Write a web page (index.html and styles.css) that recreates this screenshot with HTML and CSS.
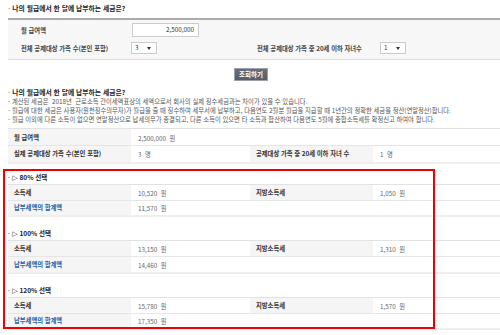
FILE: index.html
```html
<!DOCTYPE html>
<html lang="ko">
<head>
    <meta charset="UTF-8">
    <title>월급 세금 계산</title>
    <link rel="stylesheet" href="styles.css">
</head>
<body>
    <div class="page">
        <h2 class="title">나의 월급에서 한 달에 납부하는 세금은?</h2>

        <div class="form-box">
            <div class="form-row">
                <span class="form-label">월 급여액</span>
                <div class="input">2,500,000</div>
            </div>
            <div class="form-row">
                <span class="form-label">전체 공제대상 가족 수(본인 포함)</span>
                <div class="select">3</div>
                <span class="form-label right">전체 공제대상 가족 중 20세 이하 자녀수</span>
                <div class="select">1</div>
            </div>
        </div>

        <div class="btn-row">
            <button class="btn">조회하기</button>
        </div>

        <h2 class="title">나의 월급에서 한 달에 납부하는 세금은?</h2>
        <ul class="notes">
            <li>- 계산된 세금은&nbsp; 2018년&nbsp; 근로소득 간이세액표상의 세액으로서 회사의 실제 징수세금과는 차이가 있을 수 있습니다.</li>
            <li>- 월급에 대한 세금은 사용자(원천징수의무자)가 월급을 줄 때 징수하여 세무서에 납부하고, 다음연도 2월분 월급을 지급할 때 1년간의 정확한 세금을 정산(연말정산)합니다.</li>
            <li>- 월급 이외에 다른 소득이 없으면 연말정산으로 납세의무가 종결되고, 다른 소득이 있으면 타 소득과 합산하여 다음연도 5월에 종합소득세를 확정신고 하여야 합니다.</li>
        </ul>

        <table class="result summary">
            <colgroup><col class="c1"><col class="c2"><col class="c3"><col></colgroup>
            <tr>
                <th>월 급여액</th>
                <td colspan="3">2,500,000&nbsp; 원</td>
            </tr>
            <tr>
                <th>실제 공제대상 가족 수(본인 포함)</th>
                <td>3&nbsp; 명</td>
                <th>공제대상 가족 중 20세 이하 자녀 수</th>
                <td>1&nbsp; 명</td>
            </tr>
        </table>

        <div class="section">
            <h3 class="sub-title"><span class="arrow">▷</span>80% 선택</h3>
            <table class="result">
                <colgroup><col class="c1"><col class="c2"><col class="c3"><col></colgroup>
                <tr>
                    <th>소득세</th>
                    <td>10,520&nbsp; 원</td>
                    <th>지방소득세</th>
                    <td>1,050&nbsp; 원</td>
                </tr>
                <tr>
                    <th class="total">납부세액의 합계액</th>
                    <td>11,570&nbsp; 원</td>
                    <td></td>
                    <td></td>
                </tr>
            </table>
        </div>

        <div class="section">
            <h3 class="sub-title"><span class="arrow">▷</span>100% 선택</h3>
            <table class="result">
                <colgroup><col class="c1"><col class="c2"><col class="c3"><col></colgroup>
                <tr>
                    <th>소득세</th>
                    <td>13,150&nbsp; 원</td>
                    <th>지방소득세</th>
                    <td>1,310&nbsp; 원</td>
                </tr>
                <tr>
                    <th class="total">납부세액의 합계액</th>
                    <td>14,460&nbsp; 원</td>
                    <td></td>
                    <td></td>
                </tr>
            </table>
        </div>

        <div class="section">
            <h3 class="sub-title"><span class="arrow">▷</span>120% 선택</h3>
            <table class="result">
                <colgroup><col class="c1"><col class="c2"><col class="c3"><col></colgroup>
                <tr>
                    <th>소득세</th>
                    <td>15,780&nbsp; 원</td>
                    <th>지방소득세</th>
                    <td>1,570&nbsp; 원</td>
                </tr>
                <tr>
                    <th class="total">납부세액의 합계액</th>
                    <td>17,350&nbsp; 원</td>
                    <td></td>
                    <td></td>
                </tr>
            </table>
        </div>

        <!-- red annotation box over the three options -->
        <div class="highlight"></div>
    </div>
</body>
</html>
```

FILE: styles.css
```css
* {
    margin: 0;
    padding: 0;
    box-sizing: border-box;
}

body {
    font-family: "Noto Sans CJK KR", "Noto Sans", sans-serif;
    font-size: 6.3px;
    color: #555555;
    background: #ffffff;
    overflow: hidden;
}

.page {
    position: relative;
    width: 500px;
    padding-left: 8px;
}

.title {
    font-size: 6.8px;
    font-weight: bold;
    color: #222222;
    height: 10px;
    line-height: 10px;
    margin-top: 3px;
    white-space: nowrap;
}

.title::before {
    content: '·';
    color: #888888;
    margin-right: 2px;
}

/* search form */
.form-box {
    margin-top: 5px;
    background: #f7f7f7;
    border-top: 2px solid #acacac;
    border-bottom: 1px solid #dddddd;
    padding: 1px 0 2px;
}

.form-row {
    display: grid;
    grid-template-columns: 123px 119px 123px 1fr;
    align-items: center;
    height: 18px;
}

.form-label {
    font-weight: bold;
    color: #444444;
    padding-left: 13px;
    white-space: nowrap;
}

.form-label.right {
    padding-left: 7px;
}

.input {
    width: 67px;
    height: 14px;
    margin-left: 1px;
    background: #ffffff;
    border: 1px solid #cccccc;
    text-align: right;
    padding-right: 4px;
    line-height: 12px;
    color: #333333;
}

.select {
    position: relative;
    width: 26px;
    height: 12px;
    background: #ffffff;
    border: 1px solid #cccccc;
    padding-left: 3px;
    line-height: 10px;
    color: #333333;
}

.form-row .select:last-child {
    margin-left: 7px;
}

.select::after {
    content: '';
    position: absolute;
    right: 5px;
    top: 4px;
    border-left: 2px solid transparent;
    border-right: 2px solid transparent;
    border-top: 3px solid #333333;
}

.btn-row {
    display: flex;
    justify-content: center;
    padding-right: 6px;
    margin-top: 8px;
}

.btn {
    width: 34px;
    height: 13px;
    background: linear-gradient(#68707e, #555c69);
    border: 1px solid #9aa0aa;
    color: #ffffff;
    font-family: inherit;
    font-size: 6.5px;
    font-weight: bold;
    line-height: 11px;
}

.btn-row + .title {
    margin-top: 6px;
}

.notes {
    list-style: none;
    line-height: 9px;
    color: #555555;
    white-space: nowrap;
}

/* result tables */
.result {
    width: 100%;
    table-layout: fixed;
    border-collapse: collapse;
    border-top: 1px solid #e2e2e2;
}

.result .c1 { width: 123px; }
.result .c2 { width: 119px; }
.result .c3 { width: 123px; }

.result th,
.result td {
    height: 16px;
    border-bottom: 1px solid #e6e6e6;
    text-align: left;
    white-space: nowrap;
    overflow: hidden;
}

.result th {
    background: #f5f5f5;
    font-weight: bold;
    color: #333333;
    padding-left: 6px;
}

.result td {
    padding-left: 7px;
    padding-top: 2px;
    color: #666666;
}

.result th.total {
    color: #1d5ea8;
}

.result tr:last-child th,
.result tr:last-child td {
    border-bottom: 2px solid #eeeeee;
}

.summary {
    margin-top: 4px;
}

.summary th,
.summary td {
    height: 17px;
}

.section {
    margin-top: 9px;
}

.summary + .section {
    margin-top: 6px;
}

.sub-title {
    height: 14px;
    line-height: 14px;
    font-size: 6.5px;
    font-weight: bold;
    color: #222222;
}

.sub-title::before {
    content: '·';
    color: #888888;
    margin-right: 2px;
}

.arrow {
    font-family: "DejaVu Sans", sans-serif;
    font-size: 7px;
    font-weight: bold;
    color: #111111;
    margin-right: 2px;
}

.highlight {
    position: absolute;
    left: 3px;
    top: 166px;
    width: 432px;
    height: 160px;
    border: 2px solid #f00000;
    pointer-events: none;
}
```
